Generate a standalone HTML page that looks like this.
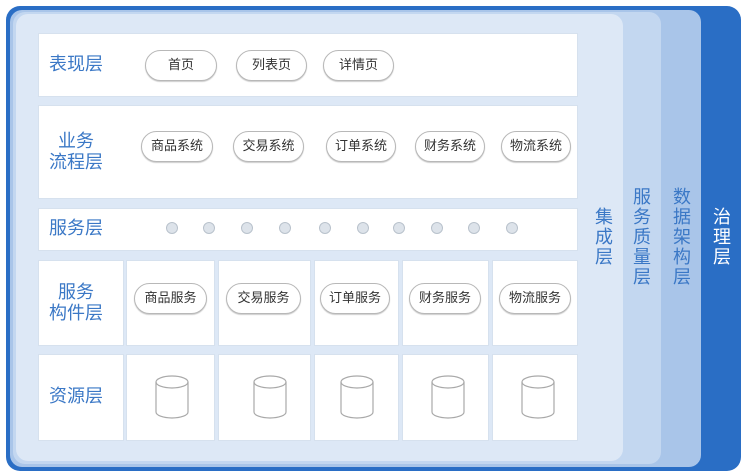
<!DOCTYPE html><html><head><meta charset="utf-8"><style>
*{margin:0;padding:0;box-sizing:border-box}
body{width:746px;height:475px;background:#fff;position:relative;overflow:hidden;font-family:"Liberation Sans","Noto Sans CJK SC",sans-serif}
.a{position:absolute}
.lab{color:#3b78c6;font-size:18px;line-height:21px;text-align:center}
.v{color:#3b78c6;font-size:18px;line-height:20px;width:20px;text-align:center}
.row{background:#fff;border:1px solid #d6e1ee}
.pill{position:absolute;border:1.5px solid #b8b8b8;border-radius:16px;background:#fff;font-size:13px;color:#333;text-align:center;height:31px;line-height:28px;box-shadow:0 1px 1px #ccc}
.dot{position:absolute;width:12px;height:12px;border-radius:50%;background:#dde3ea;border:1px solid #b9c2cc;top:222px}
</style></head><body>
<div class="a" style="left:6px;top:6px;width:735px;height:465px;background:#2a6ec5;border-radius:14px"></div>
<div class="a" style="left:10px;top:10px;width:691px;height:457px;background:#a9c5e9;border-radius:12px"></div>
<div class="a" style="left:13px;top:12px;width:648px;height:452px;background:#c3d7f0;border-radius:12px"></div>
<div class="a" style="left:16px;top:14px;width:607px;height:447px;background:#dde8f6;border-radius:12px"></div>

<div class="a row" style="left:38px;top:33px;width:540px;height:64px"></div>
<div class="a row" style="left:38px;top:105px;width:540px;height:94px"></div>
<div class="a row" style="left:38px;top:208px;width:540px;height:43px"></div>
<div class="a row" style="left:38px;top:260px;width:86px;height:86px"></div>
<div class="a row" style="left:126px;top:260px;width:89px;height:86px"></div>
<div class="a row" style="left:218px;top:260px;width:93px;height:86px"></div>
<div class="a row" style="left:314px;top:260px;width:85px;height:86px"></div>
<div class="a row" style="left:402px;top:260px;width:87px;height:86px"></div>
<div class="a row" style="left:492px;top:260px;width:86px;height:86px"></div>
<div class="a row" style="left:38px;top:354px;width:86px;height:87px"></div>
<div class="a row" style="left:126px;top:354px;width:89px;height:87px"></div>
<div class="a row" style="left:218px;top:354px;width:93px;height:87px"></div>
<div class="a row" style="left:314px;top:354px;width:85px;height:87px"></div>
<div class="a row" style="left:402px;top:354px;width:87px;height:87px"></div>
<div class="a row" style="left:492px;top:354px;width:86px;height:87px"></div>

<div class="a lab" style="left:38px;top:54px;width:76px">表现层</div>
<div class="a lab" style="left:38px;top:131px;width:76px">业务<br>流程层</div>
<div class="a lab" style="left:38px;top:218px;width:76px">服务层</div>
<div class="a lab" style="left:38px;top:282px;width:76px">服务<br>构件层</div>
<div class="a lab" style="left:38px;top:386px;width:76px">资源层</div>

<div class="pill" style="left:145px;top:50px;width:72px">首页</div>
<div class="pill" style="left:236px;top:50px;width:71px">列表页</div>
<div class="pill" style="left:323px;top:50px;width:71px">详情页</div>

<div class="pill" style="left:141px;top:131px;width:72px">商品系统</div>
<div class="pill" style="left:233px;top:131px;width:71px">交易系统</div>
<div class="pill" style="left:326px;top:131px;width:70px">订单系统</div>
<div class="pill" style="left:415px;top:131px;width:70px">财务系统</div>
<div class="pill" style="left:501px;top:131px;width:70px">物流系统</div>

<div class="dot" style="left:166px"></div><div class="dot" style="left:203px"></div><div class="dot" style="left:241px"></div><div class="dot" style="left:279px"></div><div class="dot" style="left:319px"></div><div class="dot" style="left:357px"></div><div class="dot" style="left:393px"></div><div class="dot" style="left:431px"></div><div class="dot" style="left:468px"></div><div class="dot" style="left:506px"></div>

<div class="pill" style="left:134px;top:283px;width:73px">商品服务</div>
<div class="pill" style="left:226px;top:283px;width:75px">交易服务</div>
<div class="pill" style="left:320px;top:283px;width:70px">订单服务</div>
<div class="pill" style="left:409px;top:283px;width:72px">财务服务</div>
<div class="pill" style="left:499px;top:283px;width:72px">物流服务</div>

<svg class="a" style="left:0;top:0" width="746" height="475" fill="none" stroke="#a9a9a9" stroke-width="1.2">
<g id="c"><ellipse cx="172" cy="382" rx="16" ry="6"/><path d="M156 382v30a16 6 0 0 0 32 0v-30"/></g>
<use href="#c" x="98"/><use href="#c" x="185"/><use href="#c" x="276"/><use href="#c" x="366"/>
</svg>

<div class="a v" style="left:594px;top:207px">集<br>成<br>层</div>
<div class="a v" style="left:632px;top:187px">服<br>务<br>质<br>量<br>层</div>
<div class="a v" style="left:672px;top:187px">数<br>据<br>架<br>构<br>层</div>
<div class="a v" style="left:712px;top:207px;color:#fff">治<br>理<br>层</div>
</body></html>
